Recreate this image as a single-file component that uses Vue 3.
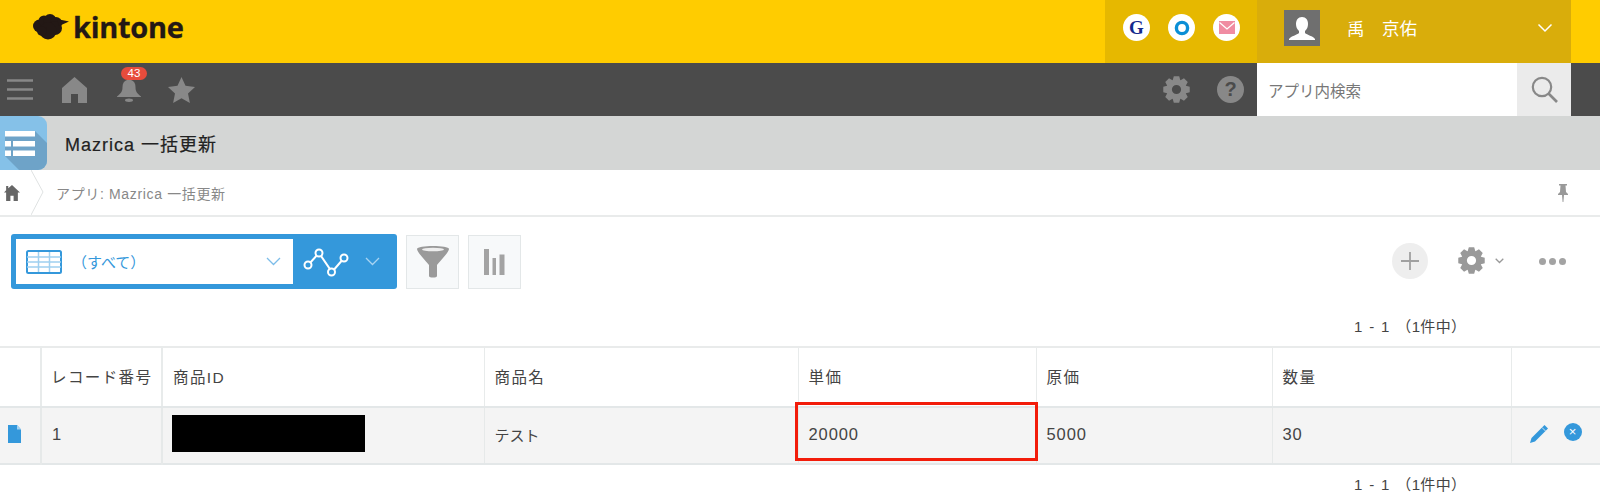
<template>
  <div class="page">
    <header class="top">
      <div class="logo">
        <svg class="cloud" width="36" height="26" viewBox="0 0 36 26">
          <g fill="#231815">
            <circle cx="6.500" cy="12" r="6.500"/>
            <circle cx="11" cy="7" r="5.500"/>
            <circle cx="17" cy="6.500" r="6.500"/>
            <circle cx="23" cy="9" r="6"/>
            <circle cx="22" cy="14" r="7"/>
            <circle cx="15" cy="17" r="8.500"/>
            <circle cx="9" cy="17" r="5"/>
            <path d="M24 5 36 7.500 26 12Z"/>
          </g>
        </svg>
        <span class="logo-text">kintone</span>
      </div>
      <div class="apps">
        <span class="round">
          <span class="g">G</span>
        </span>
        <span class="round">
          <svg width="16" height="16" viewBox="0 0 16 16"><circle cx="8" cy="8" r="5.600" fill="none" stroke="#0b8fd6" stroke-width="3.400"/></svg>
        </span>
        <span class="round">
          <svg width="16" height="13" viewBox="0 0 16 13"><rect width="16" height="13" fill="#f08ca2"/><path d="M0.500 1.500 8 8 15.500 1.500" fill="none" stroke="#fff" stroke-width="1.300"/></svg>
        </span>
      </div>
      <div class="user">
        <span class="avatar">
          <svg width="36" height="36" viewBox="0 0 36 36">
            <path d="M18 7c4 0 6 3 6 7 0 3-1 5-3 7v2c2 2 8 3 10 6v1H5v-1c2-3 8-4 10-6v-2c-2-2-3-4-3-7 0-4 2-7 6-7Z" fill="#fff"/>
          </svg>
        </span>
        <span class="user-name">禹　京佑</span>
        <svg class="user-arrow" width="16" height="10" viewBox="0 0 16 10"><path d="M1.500 1.500 8 8l6.500-6.500" fill="none" stroke="#fff" stroke-width="1.500"/></svg>
      </div>
    </header>

    <nav class="nav">
      <svg class="burger" width="26" height="21" viewBox="0 0 26 21"><path d="M0 1.500h26M0 10.500h26M0 19.500h26" stroke="#888" stroke-width="2.400"/></svg>
      <svg class="nav-home" width="25" height="26" viewBox="0 0 25 26"><path d="M12.500 0 25 11V26H16V17H9V26H0V11Z" fill="#888"/></svg>
      <span class="bell">
        <svg width="24" height="24" viewBox="0 0 24 24"><path d="M12 0c1.500 0 2 1 2 2 3 1 4.500 3.500 4.500 7 0 4 1 6 5.500 9.500V19H0v-.5C4.500 15 5.500 13 5.500 9c0-3.500 1.500-6 4.500-7 0-1 .5-2 2-2Z" fill="#888"/><ellipse cx="12" cy="22.300" rx="4" ry="1.700" fill="#888"/></svg>
        <span class="badge">43</span>
      </span>
      <svg class="nav-star" width="27" height="26" viewBox="0 0 27 26"><path d="M13.500 0l4 8.800 9.500 1.100-7 6.500 1.900 9.600-8.400-4.800-8.400 4.800L7 16.400 0 9.900l9.500-1.100Z" fill="#888"/></svg>
      <div class="nav-right">
        <svg width="27" height="27" viewBox="0 0 27 27"><path :d="gearPath" fill="#888" fill-rule="evenodd"/></svg>
        <span class="help">?</span>
      </div>
      <div class="search">
        <span class="search-text">アプリ内検索</span>
        <span class="search-btn">
          <svg width="27" height="27" viewBox="0 0 27 27"><circle cx="11" cy="11" r="9.200" fill="none" stroke="#888" stroke-width="2.200"/><path d="M17.500 17.500 26 26" stroke="#888" stroke-width="2.600"/></svg>
        </span>
      </div>
    </nav>

    <div class="title-bar">
      <span class="app-icon">
        <svg width="47" height="54" viewBox="0 0 47 54">
          <rect x="-10" width="57" height="54" rx="9" fill="#85c1e8"/>
          <path d="M35 15 47 27V45a9 9 0 0 1-9 9H19L5 40V15Z" fill="#6ea3c8"/>
          <path d="M5 15h30v5.500H5ZM5 25h6v5.500H5ZM13 25h22v5.500H13ZM5 34.500h6V40H5ZM13 34.500h22V40H13Z" fill="#fff"/>
        </svg>
      </span>
      <span class="title-text">Mazrica 一括更新</span>
    </div>

    <div class="crumbs">
      <svg class="crumb-home" width="16" height="16" viewBox="0 0 15 15"><path d="M7.500 0 15 7h-2v8H9V10H6v5H2V7H0L2 5V1h2v2Z" fill="#666"/></svg>
      <svg class="crumb-sep" width="14" height="45" viewBox="0 0 14 45"><path d="M0 0 12 22 0 45" fill="none" stroke="#dfe2e2" stroke-width="1"/></svg>
      <span class="crumb-text">アプリ: Mazrica 一括更新</span>
      <svg class="pin" width="10" height="18" viewBox="0 0 10 18"><path d="M1 0h8v1.500H7.500L8 8l2 2v1H6l-.6 7h-.8L4 11H0v-1l2-2 .5-6.500H1Z" fill="#999"/></svg>
    </div>

    <div class="toolbar">
      <div class="view-select">
        <div class="view-main">
          <svg width="36" height="24" viewBox="0 0 36 24">
            <rect x="1" y="1" width="34" height="22" rx="1.500" fill="#fff" stroke="#3498db" stroke-width="2"/>
            <path d="M1 7h34M1 12h34M1 17h34M12.500 2v20M23.500 2v20" stroke="#9fd0f0" stroke-width="1.500"/>
          </svg>
          <span class="view-name">（すべて）</span>
          <svg class="view-arrow" width="15" height="9" viewBox="0 0 15 9"><path d="M1 1l6.500 6.500L14 1" fill="none" stroke="#7dbde9" stroke-width="1.300"/></svg>
        </div>
        <svg class="graph" width="46" height="30" viewBox="0 0 46 30">
          <path d="M6 17 16 6 29 25 41 11" fill="none" stroke="#fff" stroke-width="2"/>
          <g fill="#3498db" stroke="#fff" stroke-width="2"><circle cx="5" cy="18" r="3.500"/><circle cx="16" cy="6" r="3.500"/><circle cx="28.500" cy="25" r="3.500"/><circle cx="41" cy="11" r="3.500"/></g>
        </svg>
        <svg class="graph-arrow" width="15" height="9" viewBox="0 0 15 9"><path d="M1 1l6.500 6.500L14 1" fill="none" stroke="#a8d4f2" stroke-width="1.300"/></svg>
      </div>
      <span class="tool-btn">
        <svg width="32" height="32" viewBox="0 0 32 32"><path d="M0 3C0 1 8 0 16 0s16 1 16 3c0 3-9 12-12 16v11c0 2-8 2-8 0V19C9 15 0 6 0 3Z" fill="#9a9a9a"/><ellipse cx="16" cy="3.500" rx="11" ry="1.800" fill="#eee"/></svg>
      </span>
      <span class="tool-btn">
        <svg width="21" height="26" viewBox="0 0 21 26"><path d="M0 0h5v26H0ZM8.500 9h3.500v17H8.500ZM15.500 5.500h5V26h-5Z" fill="#a3a3a3"/></svg>
      </span>
      <div class="tool-right">
        <span class="plus">
          <svg width="18" height="18" viewBox="0 0 18 18"><path d="M9 0v18M0 9h18" stroke="#a0a0a0" stroke-width="1.800"/></svg>
        </span>
        <svg class="tool-gear" width="27" height="27" viewBox="0 0 27 27"><path :d="gearPath" fill="#999" fill-rule="evenodd"/></svg>
        <svg class="tool-arrow" width="9" height="6" viewBox="0 0 9 6"><path d="M.7.7 4.500 4.500 8.300.7" fill="none" stroke="#999" stroke-width="1.300"/></svg>
        <span class="dots"><i></i><i></i><i></i></span>
      </div>
    </div>

    <div class="pager">1 - 1 （1件中）</div>

    <div class="table-wrap">
      <table class="records">
        <colgroup>
          <col v-for="w in colWidths" :key="w.id" :style="{ width: w.px + 'px' }" />
        </colgroup>
        <thead>
          <tr>
            <th></th>
            <th v-for="h in headers" :key="h">{{ h }}</th>
            <th></th>
          </tr>
        </thead>
        <tbody>
          <tr>
            <td class="doc-cell">
              <svg width="13" height="18" viewBox="0 0 13 18"><path d="M0 0h9l4 4.500V18H0Z" fill="#3498db"/><path d="M9 0l4 4.500H9Z" fill="#a5d3f2"/></svg>
            </td>
            <td class="num">1</td>
            <td class="redact-cell"><span class="redacted"></span></td>
            <td>テスト</td>
            <td class="num">20000</td>
            <td class="num">5000</td>
            <td class="num">30</td>
            <td class="act-cell">
              <svg width="18" height="18" viewBox="0 0 18 18"><path d="M14.500 0 18 3.500 5 16.500 0 18l1.500-5Z" fill="#3498db"/><path d="M12 2.500 15.500 6" stroke="#f4f4f4" stroke-width=".8"/></svg>
              <span class="del">×</span>
            </td>
          </tr>
        </tbody>
      </table>
      <span class="highlight"></span>
    </div>

    <div class="pager pager-bottom">1 - 1 （1件中）</div>
  </div>
</template>

<script setup>
const headers = ['レコード番号', '商品ID', '商品名', '単価', '原価', '数量']

const colWidths = [41, 121, 322, 314, 238, 236, 239, 89].map((px, id) => ({ id, px }))

// 8 teeth gear, shared by the nav bar and the toolbar
function makeGear() {
  const c = 13.5
  let d = ''
  for (let i = 0; i < 8; i++) {
    const a = (i * Math.PI) / 4
    const pts = [
      [10.2, -0.38],
      [13.5, -0.2],
      [13.5, 0.2],
      [10.2, 0.38],
    ]
    pts.forEach(([r, o], n) => {
      const x = c + r * Math.cos(a + o)
      const y = c + r * Math.sin(a + o)
      d += (i === 0 && n === 0 ? 'M' : 'L') + x.toFixed(2) + ' ' + y.toFixed(2)
    })
  }
  d += 'Z M' + (c + 4.6) + ' ' + c + 'a4.6 4.6 0 1 0 -9.2 0a4.6 4.6 0 1 0 9.2 0Z'
  return d
}
const gearPath = makeGear()
</script>

<style>
html, body {
  margin: 0;
  background: #fff;
  overflow: hidden;
}
</style>

<style scoped>
.page {
  width: 1600px;
  height: 501px;
  overflow: hidden;
  font-family: "Liberation Sans", "Noto Sans CJK JP", sans-serif;
  color: #333;
}

.top {
  height: 63px;
  background: #ffcc00;
  display: flex;
  box-sizing: border-box;
  padding-right: 29px;
}
.logo {
  display: flex;
  align-items: center;
  padding-left: 33px;
  flex: 1;
}
.cloud {
  margin-top: -10px;
}
.logo-text {
  font-family: "Open Sans", sans-serif;
  font-weight: 700;
  font-size: 29px;
  color: #231815;
  margin-left: 4px;
  margin-top: -10px;
  letter-spacing: -0.3px;
  -webkit-text-stroke: 0.3px #231815;
}
.apps {
  width: 152px;
  background: #e6b800;
  display: flex;
  align-items: center;
  padding: 0 0 8px 18px;
  box-sizing: border-box;
  gap: 18px;
}
.round {
  width: 27px;
  height: 27px;
  border-radius: 50%;
  background: #fff;
  display: flex;
  align-items: center;
  justify-content: center;
}
.g {
  font-family: "Liberation Serif", serif;
  font-weight: 700;
  font-size: 19px;
  color: #14288c;
}
.user {
  width: 314px;
  background: #d9ad0b;
  display: flex;
  align-items: center;
  padding: 0 0 8px 27px;
  box-sizing: border-box;
}
.avatar {
  width: 36px;
  height: 36px;
  background: #6f6f6f;
  display: block;
}
.avatar svg {
  display: block;
}
.user-name {
  margin-left: 27px;
  color: #fff;
  font-size: 17.500px;
  flex: 1;
}
.user-arrow {
  margin-right: 18px;
}

.nav {
  height: 53px;
  background: #4b4b4b;
  display: flex;
  align-items: center;
  padding-right: 29px;
}
.burger {
  margin-left: 7px;
}
.nav-home {
  margin-left: 29px;
}
.bell {
  position: relative;
  display: block;
  margin-left: 30px;
  width: 24px;
  height: 24px;
}
.bell svg {
  display: block;
}
.badge {
  position: absolute;
  left: 4px;
  top: -11px;
  width: 26px;
  height: 13px;
  border-radius: 7px;
  background: #e74c3c;
  color: #fff;
  font-size: 11.500px;
  line-height: 13px;
  text-align: center;
}
.nav-star {
  margin-left: 27px;
}
.nav-right {
  margin-left: auto;
  display: flex;
  align-items: center;
  gap: 27px;
  padding-right: 13px;
}
.help {
  width: 27px;
  height: 27px;
  border-radius: 50%;
  background: #888;
  color: #4b4b4b;
  font-weight: 700;
  font-size: 20px;
  line-height: 27px;
  text-align: center;
}
.search {
  width: 314px;
  height: 53px;
  background: #fff;
  display: flex;
  align-items: center;
}
.search-text {
  flex: 1;
  padding-left: 11px;
  font-size: 15.500px;
  color: #777;
}
.search-btn {
  width: 54px;
  height: 53px;
  background: #ebebeb;
  display: flex;
  align-items: center;
  justify-content: center;
}

.title-bar {
  height: 54px;
  background: #d4d6d5;
  display: flex;
  align-items: center;
}
.app-icon {
  width: 47px;
  height: 54px;
}
.app-icon svg {
  display: block;
}
.title-text {
  margin-left: 18px;
  font-size: 18px;
  letter-spacing: 1px;
  color: #222;
  -webkit-text-stroke: 0.2px #222;
}

.crumbs {
  height: 45px;
  border-bottom: 2px solid #e9ebeb;
  box-sizing: content-box;
  display: flex;
  align-items: center;
}
.crumb-home {
  margin-left: 4px;
}
.crumb-sep {
  margin-left: 11px;
}
.crumb-text {
  margin-left: 11px;
  font-size: 14px;
  letter-spacing: 0.65px;
  color: #888;
}
.pin {
  margin-left: auto;
  margin-right: 32px;
}

.toolbar {
  display: flex;
  align-items: center;
  padding: 17px 0 0 11px;
  height: 55px;
}
.view-select {
  width: 386px;
  height: 55px;
  background: #3498db;
  border-radius: 3px;
  display: flex;
  align-items: center;
  box-sizing: border-box;
  padding: 0 5px;
}
.view-main {
  width: 277px;
  height: 45px;
  background: #fff;
  display: flex;
  align-items: center;
  box-sizing: border-box;
  padding: 0 12px 0 10px;
}
.view-name {
  flex: 1;
  margin-left: 10px;
  font-size: 15px;
  color: #3498db;
}
.graph {
  margin-left: 10px;
}
.graph-arrow {
  margin-left: 16px;
}
.tool-btn {
  width: 53px;
  height: 54px;
  margin-left: 9px;
  background: #f7f9fa;
  border: 1px solid #e3e7e8;
  box-sizing: border-box;
  display: flex;
  align-items: center;
  justify-content: center;
}
.tool-right {
  margin-left: auto;
  display: flex;
  align-items: center;
  padding-right: 34px;
  padding-bottom: 2px;
}
.plus {
  width: 36px;
  height: 36px;
  border-radius: 50%;
  background: #eeeeee;
  display: flex;
  align-items: center;
  justify-content: center;
}
.tool-gear {
  margin-left: 30px;
}
.tool-arrow {
  margin-left: 10px;
}
.dots {
  margin-left: 35px;
  margin-top: 2px;
  display: flex;
  gap: 3px;
}
.dots i {
  display: block;
  width: 7px;
  height: 7px;
  border-radius: 50%;
  background: #a3a3a3;
}

.pager {
  margin-top: 28px;
  height: 20px;
  line-height: 20px;
  padding-left: 1354px;
  font-size: 15px;
  letter-spacing: 0.35px;
  word-spacing: 2px;
  color: #444;
}
.pager-bottom {
  margin-top: 10px;
}

.table-wrap {
  position: relative;
  margin-top: 9px;
}
.records {
  width: 1600px;
  table-layout: fixed;
  border-collapse: collapse;
  border-top: 2px solid #e9ebeb;
  border-bottom: 2px solid #e3e7e8;
  font-size: 15px;
  color: #444;
}
.records th {
  height: 60px;
  padding: 0 0 2px 10px;
  box-sizing: border-box;
  text-align: left;
  font-weight: 400;
  background: #fff;
  border-right: 1px solid #e8ebeb;
  border-bottom: 2px solid #e3e7e8;
  white-space: nowrap;
  font-size: 15.500px;
  letter-spacing: 1.400px;
}
.records th:nth-child(2) {
  padding-left: 9px;
}
.records th:nth-child(-n+2),
.records td:nth-child(-n+2) {
  border-right-width: 2px;
}
.records th:last-child,
.records td:last-child {
  border-right: 0;
}
.records td {
  height: 57px;
  box-sizing: border-box;
  padding: 0 0 3px 10px;
  background: #f4f4f4;
  border-right: 1px solid #e6e9e9;
}
.records td.num {
  font-size: 16.500px;
  letter-spacing: 0.9px;
}
.records td.doc-cell {
  padding: 0 0 3px 8px;
}
.doc-cell svg {
  display: block;
}
.records td.redact-cell {
  padding: 0 0 4px 9px;
}
.redacted {
  display: block;
  width: 193px;
  height: 37px;
  background: #000;
}
.records td.act-cell {
  padding-left: 18px;
}
.act-cell {
  white-space: nowrap;
}
.act-cell svg {
  vertical-align: middle;
}
.del {
  display: inline-block;
  width: 18px;
  height: 18px;
  margin-left: 16px;
  margin-bottom: 4px;
  border-radius: 50%;
  background: #3498db;
  color: #fff;
  font-size: 13px;
  line-height: 18px;
  text-align: center;
  vertical-align: middle;
}
.highlight {
  position: absolute;
  left: 795px;
  top: 56px;
  width: 243px;
  height: 59px;
  box-sizing: border-box;
  border: 3px solid #f21c0a;
}
</style>
